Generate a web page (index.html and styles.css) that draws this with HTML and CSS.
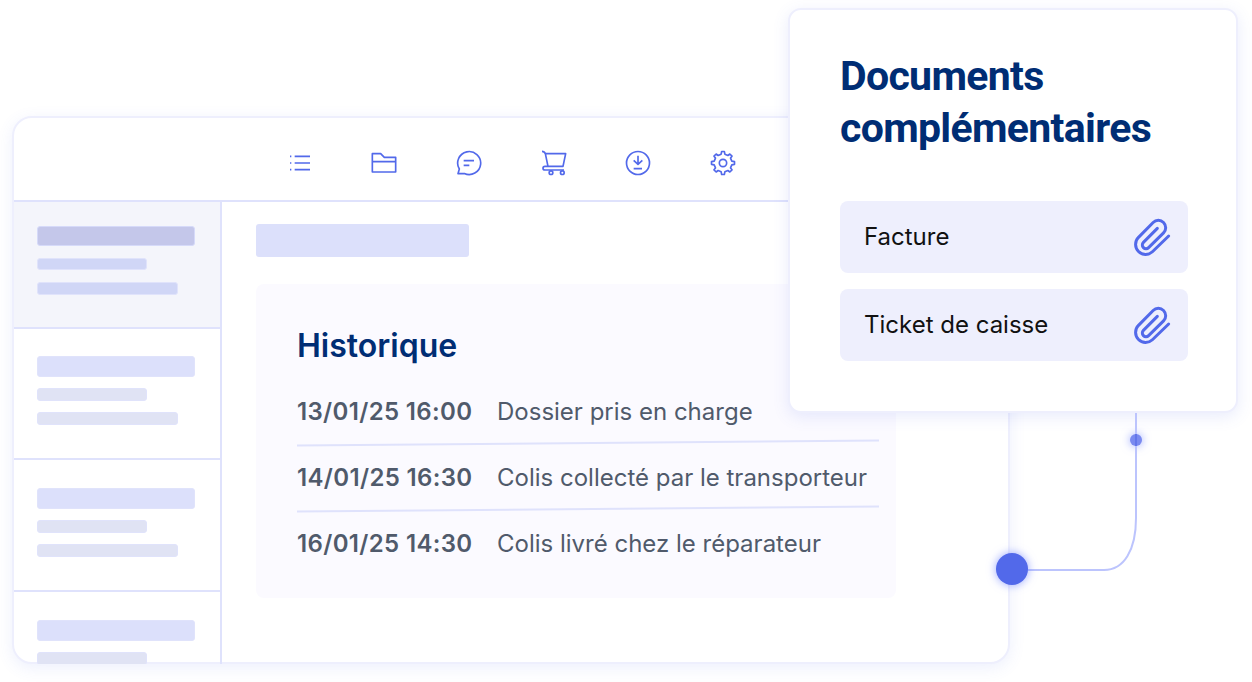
FILE: index.html
```
<!DOCTYPE html>
<html lang="fr">
<head>
  <meta charset="UTF-8">
  <meta name="viewport" content="width=device-width, initial-scale=1.0">
  <link rel="stylesheet" href="styles.css">
  <title>Historique du dossier</title>
</head>
<body>
  <div class="scene">
    <div class="window">
      <header class="toolbar">
        <svg class="icon" viewBox="0 0 78 78"><path d="M9 19h4M9 39h4M9 59h4M23 19h46M23 39h46M23 59h46"/></svg>
        <svg class="icon" viewBox="0 0 78 78"><path d="M4 11h25l11 11h34v44H4zM4 35h70"/></svg>
        <svg class="icon" viewBox="0 0 78 78"><path d="M6 71l4-14A34.5 34.5 0 1 1 25 70.5zM23 32h31M23 46h17"/></svg>
        <svg class="icon" viewBox="0 0 78 78">
          <path d="M3 4c6 0 8 2 10 7h61l-8 38H21L13 11M66 49H12c-8 0-8 11 0 11h57"/>
          <circle cx="30" cy="68" r="5.5"/>
          <circle cx="64" cy="68" r="5.5"/>
        </svg>
        <svg class="icon" viewBox="0 0 78 78">
          <circle cx="39" cy="39" r="34.5"/>
          <path d="M39 17v26M26 31l13 12 13-12M26 56h25"/>
        </svg>
        <svg class="icon" viewBox="-39 -39 78 78">
          <circle r="11"/>
          <path d="M-5.6-26.4L-4-34.5H4L5.6-26.4L14.7-22.6L20.5-27L27-20.5L22.6-14.7L26.4-5.6L34.5-4V4L26.4 5.6L22.6 14.7L27 20.5L20.5 27L14.7 22.6L5.6 26.4L4 34.5H-4L-5.6 26.4L-14.7 22.6L-20.5 27L-27 20.5L-22.6 14.7L-26.4 5.6L-34.5 4V-4L-26.4-5.6L-22.6-14.7L-27-20.5L-20.5-27L-14.7-22.6Z"/>
        </svg>
      </header>

      <div class="content">
        <aside class="sidebar">
          <div class="item active">
            <div class="bar title"></div>
            <div class="bar short"></div>
            <div class="bar medium"></div>
          </div>
          <div class="item">
            <div class="bar title"></div>
            <div class="bar short"></div>
            <div class="bar medium"></div>
          </div>
          <div class="item">
            <div class="bar title"></div>
            <div class="bar short"></div>
            <div class="bar medium"></div>
          </div>
          <div class="item">
            <div class="bar title"></div>
            <div class="bar short"></div>
            <div class="bar medium"></div>
          </div>
        </aside>

        <main class="main">
          <div class="placeholder"></div>
          <section class="history">
            <h2>Historique</h2>
            <div class="row"><span class="date">13/01/25 16:00</span><span class="label">Dossier pris en charge</span></div>
            <svg class="separator" viewBox="0 0 582 8"><path d="M0 6.5L582 1.5"/></svg>
            <div class="row"><span class="date">14/01/25 16:30</span><span class="label">Colis collecté par le transporteur</span></div>
            <svg class="separator" viewBox="0 0 582 8"><path d="M0 6.5L582 1.5"/></svg>
            <div class="row"><span class="date">16/01/25 14:30</span><span class="label">Colis livré chez le réparateur</span></div>
          </section>
        </main>
      </div>
    </div>

    <div class="card">
      <h1>Documents<br>complémentaires</h1>
      <div class="file">
        <span>Facture</span>
        <svg class="clip" viewBox="66 51 117 120"><path d="M176 108L127.2 155.2A30 30 0 0 1 84.8 112.8L129.4 67.4A22 22 0 0 1 160.6 98.6L115.8 142.8A11 11 0 0 1 100.2 127.2L142 85"/></svg>
      </div>
      <div class="file">
        <span>Ticket de caisse</span>
        <svg class="clip" viewBox="66 51 117 120"><path d="M176 108L127.2 155.2A30 30 0 0 1 84.8 112.8L129.4 67.4A22 22 0 0 1 160.6 98.6L115.8 142.8A11 11 0 0 1 100.2 127.2L142 85"/></svg>
      </div>
    </div>

    <!-- lien entre la carte et la fenêtre -->
    <svg class="connector" viewBox="0 0 180 190">
      <circle class="dot small" cx="156" cy="27" r="6"/>
      <path d="M156 0V21M156 33V105C156 137 144 157 124 157H48"/>
      <path class="through" d="M156 21V33"/>
      <circle class="dot" cx="32" cy="156" r="16"/>
    </svg>
  </div>
</body>
</html>
```
FILE: styles.css
```
* {
    box-sizing: border-box;
}

body {
    margin: 0;
    overflow: hidden;
    background: #fff;
    font-family: Inter, "Liberation Sans", sans-serif;
}

.scene {
    position: relative;
    width: 1252px;
    height: 682px;
    padding: 116px 0 0 12px;
}

.window {
    width: 998px;
    height: 548px;
    border: 2px solid #eeeffd;
    border-radius: 20px;
    background: #fff;
    box-shadow: 0 4px 16px rgba(82, 105, 234, 0.1);
}

.toolbar {
    display: flex;
    align-items: center;
    gap: 58.7px;
    height: 84px;
    padding: 8px 0 0 272.5px;
    border-bottom: 2px solid #dfe2fc;
}

.icon {
    width: 26px;
    height: 26px;
    fill: none;
    stroke: #5269ea;
    stroke-width: 5;
    stroke-linejoin: round;
}

.content {
    display: flex;
    height: 462px;
}

.sidebar {
    width: 208px;
    border-right: 2px solid #dfe2fc;
    overflow: hidden;
}

.item {
    height: 132px;
    padding: 28px 0 0 23px;
    border-bottom: 2px solid #dfe2fc;
}

.item.active {
    height: 127px;
    padding-top: 24px;
    background: #f4f5fb;
}

.item:nth-child(2) {
    height: 131px;
    padding-top: 27px;
}

.bar {
    height: 13px;
    margin-bottom: 11px;
    border: 1px solid #e0e3fb;
    border-radius: 3px;
    background: #e0e3f4;
}

.bar.title {
    width: 158px;
    height: 21px;
    background: #dce0fb;
}

.bar.short {
    width: 110px;
}

.bar.medium {
    width: 141px;
}

.active .bar {
    background: #d0d6f6;
}

.active .bar.title {
    height: 20px;
    margin-bottom: 12px;
    background: #c4c7ea;
    border-color: #d6daf9;
}

.active .bar.short {
    height: 12px;
    margin-bottom: 12px;
}

.main {
    padding: 22px 0 0 34px;
}

.placeholder {
    width: 213px;
    height: 33px;
    border-radius: 3px;
    background: #dce0fb;
}

.history {
    width: 640px;
    height: 314px;
    margin-top: 27px;
    padding: 42px 0 0 41px;
    border-radius: 8px;
    background: #fbfaff;
}

h2 {
    margin: 0 0 27px;
    color: #002d74;
    font-size: 32px;
    font-weight: 600;
    line-height: 40px;
}

.row {
    display: flex;
    align-items: center;
    height: 36px;
    color: #505a6b;
    font-size: 24px;
}

.date {
    width: 200px;
    font-weight: 600;
    letter-spacing: 0.35px;
}

.separator {
    display: block;
    width: 582px;
    height: 8px;
    margin: 10px 0 12px;
    fill: none;
    stroke: #dfe2fc;
    stroke-width: 2;
}

.card {
    position: absolute;
    left: 788px;
    top: 8px;
    width: 450px;
    height: 405px;
    padding: 40px 48px 0 50px;
    border: 2px solid #eeeffd;
    border-radius: 13px;
    background: #fff;
    box-shadow: 0 4px 16px rgba(82, 105, 234, 0.13);
}

h1 {
    margin: 0 0 47px;
    color: #002d74;
    font-family: Roboto, "Liberation Sans", sans-serif;
    font-size: 41px;
    font-weight: 700;
    line-height: 52px;
    letter-spacing: -0.68px;
}

.file {
    display: flex;
    align-items: center;
    justify-content: space-between;
    height: 72px;
    margin-bottom: 16px;
    padding: 0 17px 0 24px;
    border-radius: 8px;
    background: #eeeffd;
    color: #111;
    font-size: 24px;
}

.file span {
    padding-bottom: 2px;
}

.clip {
    width: 39px;
    height: 40px;
    fill: none;
    stroke: #5269ea;
    stroke-width: 9;
    stroke-linecap: round;
}

.connector {
    position: absolute;
    left: 980px;
    top: 413px;
    width: 180px;
    height: 190px;
    fill: none;
    stroke: #bcc4fd;
    stroke-width: 2;
}

.through {
    stroke: #6376ea;
}

.dot {
    fill: #5269ea;
    stroke: none;
    filter: drop-shadow(0 0 5px rgba(82, 105, 255, 0.6));
}

.dot.small {
    fill: #7a8af0;
}
```
